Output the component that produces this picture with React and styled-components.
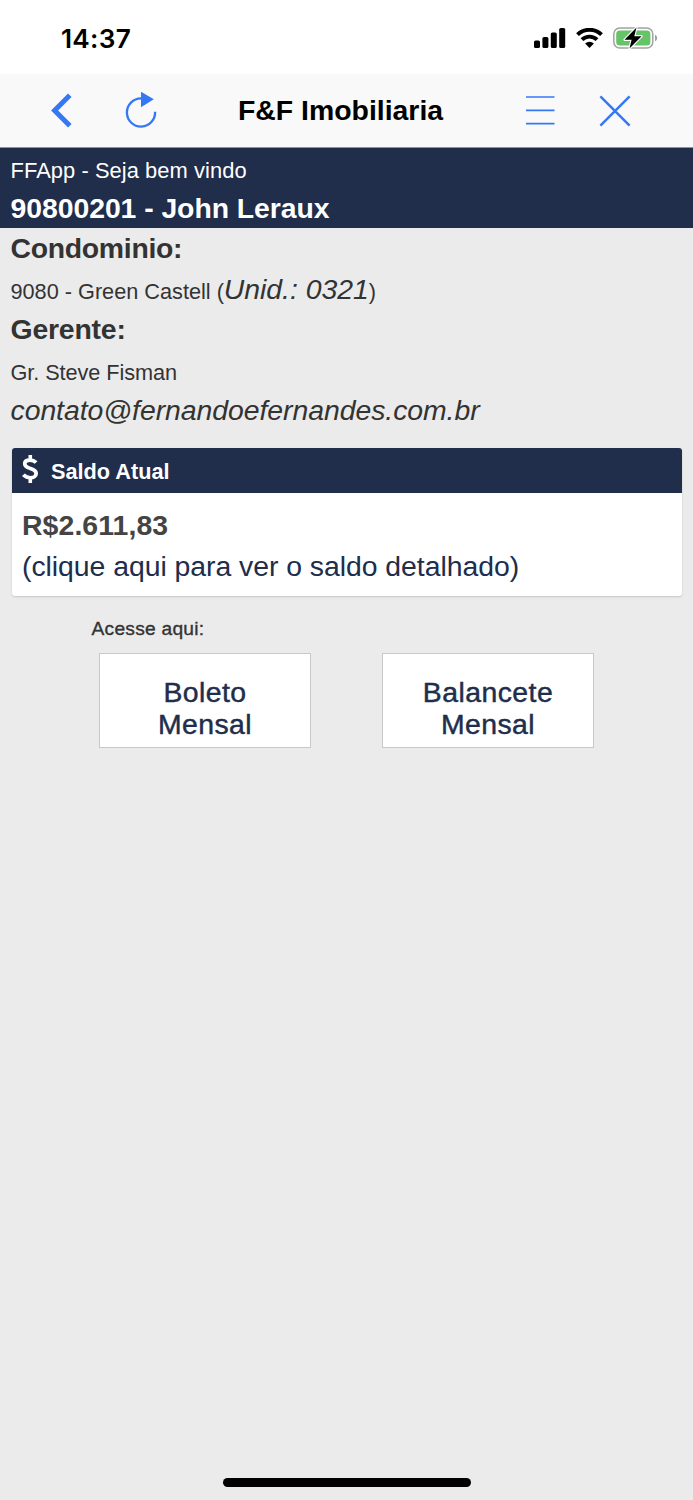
import React from "react";
import styled, { createGlobalStyle } from "styled-components";

const navy = "#202d4b";
const blue = "#3478f6";

const GlobalStyle = createGlobalStyle`
  *, *::before, *::after { box-sizing: border-box; }
  body { margin: 0; background: #ebebeb; }
`;

const Screen = styled.div`
  display: flex;
  flex-direction: column;
  min-height: 1500px;
  background: #ebebeb;
  color: #333;
  font-family: "Liberation Sans", Arial, sans-serif;
  font-size: 28.4px;
  line-height: 40.5px;
  white-space: nowrap;
`;

const StatusBar = styled.header`
  display: flex;
  align-items: center;
  justify-content: space-between;
  height: 74px;
  padding: 2px 35px 0 61px;
  background: #fff;
`;

const Clock = styled.time`
  padding-top: 2px;
  color: #000;
  font: 600 26.2px/32px Inter, sans-serif;
  letter-spacing: 0.3px;
`;

const StatusIcons = styled.div`
  display: flex;
  align-items: center;
  gap: 10px;
`;

const NavBar = styled.nav`
  display: grid;
  grid-template-columns: 102px 78px 1fr 75px 116px;
  align-items: center;
  height: 74px;
  border-bottom: 1px solid #8d93a1;
  background: #f9f9f9;
`;

const NavButton = styled.button`
  display: flex;
  align-items: center;
  justify-content: ${(p) => p.$align || "center"};
  padding: 0 ${(p) => p.$right || 0}px 0 ${(p) => p.$left || 0}px;
  border: 0;
  background: none;
`;

const NavTitle = styled.h1`
  margin: 0;
  padding: 0 0 1px 58px;
  color: #000;
  font-size: 28.4px;
  font-weight: 700;
`;

const Welcome = styled.section`
  height: 80px;
  padding-left: 10.5px;
  background: ${navy};
  color: #fff;
`;

const Line = styled.div`
  height: ${(p) => p.$height || 40.5}px;
  font-weight: ${(p) => (p.$bold ? 700 : 400)};
  font-style: ${(p) => (p.$italic ? "italic" : "normal")};
  letter-spacing: ${(p) => p.$track || 0}px;
`;

const Small = styled.span`
  font-size: ${(p) => p.$size || 21.7}px;
  letter-spacing: ${(p) => p.$track || 0}px;
`;

const Details = styled.section`
  padding: 0 10.5px;
`;

const BalanceCard = styled.section`
  margin: 17.5px 11px 0 12px;
  border-radius: 3px;
  background: #fff;
  box-shadow: 0 1px 2px rgba(0, 0, 0, 0.16);
  overflow: hidden;
`;

const CardHead = styled.div`
  display: flex;
  align-items: center;
  gap: 12px;
  height: 45px;
  padding: 0 0 1px 10px;
  background: ${navy};
  color: #fff;
  font-size: 21.7px;
  font-weight: 700;

  svg { margin-top: -3px; }
  span { padding-top: 4px; }
`;

const CardBody = styled.div`
  height: 103px;
  padding: 12px 0 0 10px;
`;

const Amount = styled(Line)`
  color: #444;
`;

const DetailLink = styled(Line)`
  color: ${navy};
`;

const AccessLabel = styled.div`
  margin: 12.5px 0 0 91.5px;
  height: 44.5px;
  line-height: 39px;
  font-size: 19.2px;
  letter-spacing: 0.25px;
  -webkit-text-stroke: 0.35px currentColor;
`;

const Actions = styled.div`
  display: flex;
  gap: 71px;
  padding-left: 99px;
`;

const ActionButton = styled.button`
  width: 212px;
  height: 95px;
  padding: 14px 0 0;
  border: 1.5px solid #c8c8c8;
  background: #fff;
  color: ${navy};
  font: inherit;
  line-height: 32px;
  letter-spacing: 0.45px;
  -webkit-text-stroke: 0.45px currentColor;
`;

const HomeIndicator = styled.div`
  width: 248px;
  height: 8.5px;
  margin: auto auto 13.5px;
  border-radius: 5px;
  background: #000;
`;

const Signal = () => (
  <svg width="32" height="20" viewBox="0 0 32 20">
    <rect x="0" y="12.5" width="6" height="7.5" rx="1.6" />
    <rect x="8.4" y="9" width="6" height="11" rx="1.6" />
    <rect x="16.8" y="4.5" width="6" height="15.5" rx="1.6" />
    <rect x="25.2" y="0" width="6" height="20" rx="1.6" />
  </svg>
);

const Wifi = () => (
  <svg width="27" height="20" viewBox="0 0 27 20">
    <g fill="none" stroke="#000" strokeWidth="3.9">
      <path d="M1.5 6.7a17 17 0 0 1 24 0" />
      <path d="M6 11.7a10.6 10.6 0 0 1 15 0" />
    </g>
    <path d="M13.5 20l-4.4-4.5a6.2 6.2 0 0 1 8.8 0z" />
  </svg>
);

const Battery = () => (
  <svg width="45" height="22" viewBox="0 0 45 22">
    <rect x=".8" y="1" width="39" height="20" rx="6" fill="#fff" stroke="#a2a2a2" strokeWidth="1.5" />
    <rect x="3.2" y="3.4" width="34.2" height="15.2" rx="3.5" fill="#65c466" />
    <path d="M42 7.5q2.2 1 2.2 3.5T42 14.5z" fill="#a2a2a2" />
    <path d="M23.5 .5L11.5 12.8h7.1L16.5 21.5 28.6 9.2h-7.3z" stroke="#fff" strokeWidth="2.2" paintOrder="stroke" strokeLinejoin="round" />
  </svg>
);

const BackIcon = () => (
  <svg width="22" height="36" viewBox="0 0 22 36">
    <path d="M18.8 2.2L3.6 17.5l15.2 15.3" fill="none" stroke={blue} strokeWidth="5" />
  </svg>
);

const ReloadIcon = () => (
  <svg width="32" height="38" viewBox="0 0 32 38">
    <path d="M30.1 19.8A14.1 14.1 0 1 1 16 6.4" fill="none" stroke={blue} strokeWidth="2.3" />
    <path d="M16 -.3v15.6l12.8-8z" fill={blue} />
  </svg>
);

const MenuIcon = () => (
  <svg width="30" height="30" viewBox="0 0 30 30">
    <path d="M1 1h28.5M1 14.3h28.5M1 27.7h28.5" stroke={blue} strokeWidth="1.7" />
  </svg>
);

const CloseIcon = () => (
  <svg width="32" height="32" viewBox="0 0 32 32">
    <path d="M1.4 1.4l29.2 29.2M30.6 1.4L1.4 30.6" stroke={blue} strokeWidth="2.5" />
  </svg>
);

const DollarIcon = () => (
  <svg width="17" height="28" viewBox="0 0 16 28" preserveAspectRatio="none" fill="none" stroke="#fff" strokeWidth="3.6">
    <path d="M13.3 7.6C11.5 5.7 9.6 5.1 7.6 5.1 4.7 5.1 2.6 6.4 2.6 8.7c0 3 2.8 3.9 5.3 4.8 2.9 1 5.4 2 5.4 5 0 2.7-2.4 4.3-5.4 4.3-2.7 0-4.8-1.1-6.6-3" />
    <path d="M7.8 0v5.5M7.8 22.5V28" strokeWidth="3.4" />
  </svg>
);

export default function App() {
  return (
    <Screen>
      <GlobalStyle />
      <StatusBar>
        <Clock>14:37</Clock>
        <StatusIcons>
          <Signal />
          <Wifi />
          <Battery />
        </StatusIcons>
      </StatusBar>
      <NavBar>
        <NavButton aria-label="Voltar" $align="flex-end" $right={29.5}><BackIcon /></NavButton>
        <NavButton aria-label="Recarregar"><ReloadIcon /></NavButton>
        <NavTitle>F&amp;F Imobiliaria</NavTitle>
        <NavButton aria-label="Menu"><MenuIcon /></NavButton>
        <NavButton aria-label="Fechar" $align="flex-start" $left={22}><CloseIcon /></NavButton>
      </NavBar>
      <Welcome>
        <Line $height={39.5}><Small $size={21.9} $track={0.06}>FFApp - Seja bem vindo</Small></Line>
        <Line $bold $track={-0.06}>90800201 - John Leraux</Line>
      </Welcome>
      <Details>
        <Line $bold $track={-0.3}>Condominio:</Line>
        <Line $track={-0.04}><Small>9080 - Green Castell (</Small><em>Unid.: 0321</em><Small>)</Small></Line>
        <Line $bold $track={-0.2}>Gerente:</Line>
        <Line><Small $track={-0.06}>Gr. Steve Fisman</Small></Line>
        <Line $italic $track={-0.05}>contato@fernandoefernandes.com.br</Line>
      </Details>
      <BalanceCard>
        <CardHead><DollarIcon /><span>Saldo Atual</span></CardHead>
        <CardBody>
          <Amount $bold $track={0.1}>R$2.611,83</Amount>
          <DetailLink $track={-0.04}>(clique aqui para ver o saldo detalhado)</DetailLink>
        </CardBody>
      </BalanceCard>
      <AccessLabel>Acesse aqui:</AccessLabel>
      <Actions>
        <ActionButton>Boleto<br />Mensal</ActionButton>
        <ActionButton>Balancete<br />Mensal</ActionButton>
      </Actions>
      <HomeIndicator />
    </Screen>
  );
}
